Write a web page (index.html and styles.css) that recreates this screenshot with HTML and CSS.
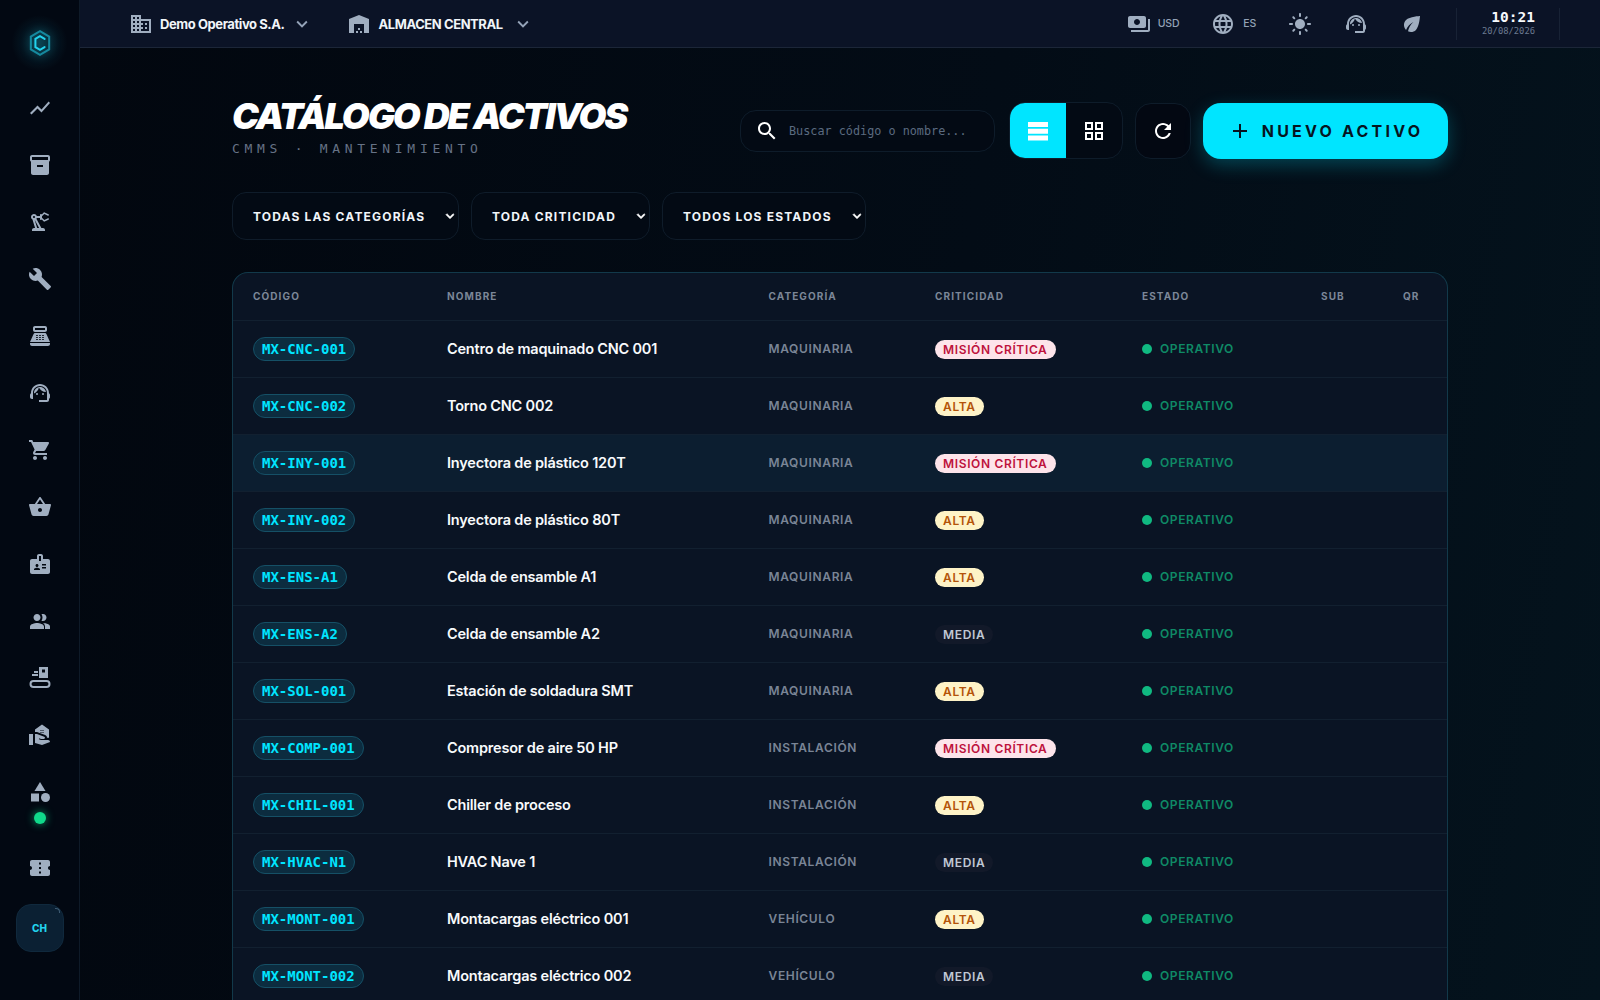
FILE: index.html
```html
<!DOCTYPE html>
<html lang="es">
<head>
  <meta charset="UTF-8">
  <title>Catálogo de Activos</title>
  <link rel="stylesheet" href="styles.css">
</head>
<body>
  <svg class="defs" width="0" height="0">
    <symbol id="i-chart" viewBox="0 0 24 24"><path d="M3.5 18.49l6-6.01 4 4L22 6.92l-1.41-1.41-7.09 7.97-4-4L2 16.99z"/></symbol>
    <symbol id="i-inventory" viewBox="0 0 24 24"><path d="M20 2H4c-1 0-2 .9-2 2v3.01c0 .72.43 1.34 1 1.69V20c0 1.1 1.1 2 2 2h14c.9 0 2-.9 2-2V8.7c.57-.35 1-.97 1-1.69V4c0-1.1-1-2-2-2zm-5 12H9v-2h6v2zm5-7H4V4l16-.02V7z"/></symbol>
    <symbol id="i-robot" viewBox="0 0 24 24"><path d="M19.93 8.35l-3.6 1.68L14 7.7V6.3l2.33-2.33 3.6 1.68c.38.18.82.01 1-.36.18-.38.01-.82-.36-1l-3.92-1.83c-.38-.18-.83-.1-1.13.2L13.78 4.4c-.18-.24-.46-.4-.78-.4-.55 0-1 .45-1 1v1H8.82C8.4 4.84 7.3 4 6 4 4.34 4 3 5.34 3 7c0 1.1.6 2.05 1.48 2.58L7.08 18H6c-1.1 0-2 .9-2 2v1h13v-1c0-1.1-.9-2-2-2h-1.62L8.41 8.77c.17-.24.31-.49.41-.77H12v1c0 .55.45 1 1 1 .32 0 .6-.16.78-.4l1.74 1.74c.3.3.75.38 1.13.2l3.92-1.83c.38-.18.54-.62.36-1-.18-.37-.62-.54-1-.36zM6 8c-.55 0-1-.45-1-1s.45-1 1-1 1 .45 1 1-.45 1-1 1zm5.11 10H9.17l-2.46-8h.1l4.3 8z"/></symbol>
    <symbol id="i-build" viewBox="0 0 24 24"><path d="M22.7 19l-9.1-9.1c.9-2.3.4-5-1.5-6.9-2-2-5-2.4-7.4-1.3L9 6 6 9 1.6 4.7C.4 7.1.9 10.1 2.9 12.1c1.9 1.9 4.6 2.4 6.9 1.5l9.1 9.1c.4.4 1 .4 1.4 0l2.3-2.3c.5-.4.5-1.1.1-1.4z"/></symbol>
    <symbol id="i-pos" viewBox="0 0 24 24"><path d="M17 2H7c-1.1 0-2 .9-2 2v2c0 1.1.9 2 2 2h10c1.1 0 2-.9 2-2V4c0-1.1-.9-2-2-2zm0 4H7V4h10v2zm3 16H4c-1.1 0-2-.9-2-2v-1h20v1c0 1.1-.9 2-2 2zm-1.47-11.81C18.21 9.47 17.49 9 16.7 9H7.3c-.79 0-1.51.47-1.83 1.19L2 18h20l-3.47-7.81zM9.5 16h-1c-.28 0-.5-.22-.5-.5s.22-.5.5-.5h1c.28 0 .5.22.5.5s-.22.5-.5.5zm0-2h-1c-.28 0-.5-.22-.5-.5s.22-.5.5-.5h1c.28 0 .5.22.5.5s-.22.5-.5.5zm0-2h-1c-.28 0-.5-.22-.5-.5s.22-.5.5-.5h1c.28 0 .5.22.5.5s-.22.5-.5.5zm3 4h-1c-.28 0-.5-.22-.5-.5s.22-.5.5-.5h1c.28 0 .5.22.5.5s-.22.5-.5.5zm0-2h-1c-.28 0-.5-.22-.5-.5s.22-.5.5-.5h1c.28 0 .5.22.5.5s-.22.5-.5.5zm0-2h-1c-.28 0-.5-.22-.5-.5s.22-.5.5-.5h1c.28 0 .5.22.5.5s-.22.5-.5.5zm3 4h-1c-.28 0-.5-.22-.5-.5s.22-.5.5-.5h1c.28 0 .5.22.5.5s-.22.5-.5.5zm0-2h-1c-.28 0-.5-.22-.5-.5s.22-.5.5-.5h1c.28 0 .5.22.5.5s-.22.5-.5.5zm0-2h-1c-.28 0-.5-.22-.5-.5s.22-.5.5-.5h1c.28 0 .5.22.5.5s-.22.5-.5.5z"/></symbol>
    <symbol id="i-agent" viewBox="0 0 24 24"><path d="M21 12.22C21 6.73 16.74 3 12 3c-4.69 0-9 3.65-9 9.28-.6.34-1 .98-1 1.72v2c0 1.1.9 2 2 2h1v-6.1c0-3.87 3.13-7 7-7s7 3.13 7 7V19h-8v2h8c1.1 0 2-.9 2-2v-1.22c.59-.31 1-.92 1-1.64v-2.3c0-.7-.41-1.31-1-1.62z"/><circle cx="9" cy="13" r="1"/><circle cx="15" cy="13" r="1"/><path d="M18 11.03C17.52 8.18 15.04 6 12.05 6c-3.03 0-6.29 2.51-6.03 6.45 2.47-1.01 4.33-3.21 4.86-5.89 1.31 2.63 4 4.44 7.12 4.47z"/></symbol>
    <symbol id="i-cart" viewBox="0 0 24 24"><path d="M7 18c-1.1 0-1.99.9-1.99 2S5.9 22 7 22s2-.9 2-2-.9-2-2-2zM1 2v2h2l3.6 7.59-1.35 2.45c-.16.28-.25.61-.25.96 0 1.1.9 2 2 2h12v-2H7.42c-.14 0-.25-.11-.25-.25l.03-.12.9-1.63h7.45c.75 0 1.41-.41 1.75-1.03l3.58-6.49c.08-.14.12-.31.12-.48 0-.55-.45-1-1-1H5.21l-.94-2H1zm16 16c-1.1 0-1.99.9-1.99 2s.89 2 1.99 2 2-.9 2-2-.9-2-2-2z"/></symbol>
    <symbol id="i-basket" viewBox="0 0 24 24"><path d="M17.21 9l-4.38-6.56c-.19-.28-.51-.42-.83-.42-.32 0-.64.14-.83.43L6.79 9H2c-.55 0-1 .45-1 1 0 .09.01.18.04.27l2.54 9.27c.23.84 1 1.46 1.92 1.46h13c.92 0 1.69-.62 1.93-1.46l2.54-9.27L23 10c0-.55-.45-1-1-1h-4.79zM9 9l3-4.4L15 9H9zm3 8c-1.1 0-2-.9-2-2s.9-2 2-2 2 .9 2 2-.9 2-2 2z"/></symbol>
    <symbol id="i-badge" viewBox="0 0 24 24"><path d="M20 7h-5V4c0-1.1-.9-2-2-2h-2c-1.1 0-2 .9-2 2v3H4c-1.1 0-2 .9-2 2v11c0 1.1.9 2 2 2h16c1.1 0 2-.9 2-2V9c0-1.1-.9-2-2-2zM9 12c.83 0 1.5.67 1.5 1.5S9.83 15 9 15s-1.5-.67-1.5-1.5S8.17 12 9 12zm3 6H6v-.75c0-1 2-1.5 3-1.5s3 .5 3 1.5V18zm1-9h-2V4h2v5zm5 7.5h-4V15h4v1.5zm0-3h-4V12h4v1.5z"/></symbol>
    <symbol id="i-group" viewBox="0 0 24 24"><path d="M9 12c1.93 0 3.5-1.57 3.5-3.500S10.930 5 9 5 5.500 6.570 5.500 8.500 7.070 12 9 12zm0 2c-2.340 0-7 1.170-7 3.500V20h14v-2.500c0-2.330-4.660-3.500-7-3.500zm6.040.05c1.160.84 1.960 1.960 1.960 3.450V20h5v-2.500c0-2.020-3.500-3.170-6.960-3.450zM15 12c1.930 0 3.500-1.570 3.500-3.500S16.930 5 15 5c-.54 0-1.040.13-1.500.35.630.89 1 1.980 1 3.150s-.37 2.260-1 3.150c.46.220.96.350 1.500.35z"/></symbol>
    <symbol id="i-conveyor" viewBox="0 0 24 24"><path fill-rule="evenodd" d="M11 1h9v11h-9zM14 3.500v3h3v-3zM6 5h4v2H6zM4 8h6v2H4zM5.500 14h13a4 4 0 0 1 0 8h-13a4 4 0 0 1 0-8zm0 2a2 2 0 0 0 0 4h13a2 2 0 0 0 0-4z"/></symbol>
    <symbol id="i-handhome" viewBox="0 0 24 24"><path d="M1 22h4V11H1v11zm19-5h-7l-2.09-.73.33-.94L13 16h2.82c.65 0 1.18-.53 1.18-1.18 0-.49-.31-.93-.77-1.11L8.97 11H7v9.02L14 22l8-3c-.01-1.1-.89-2-2-2z"/><path d="M14 1.5l-7 5V9h2l8.11 3.06C18.26 12.49 19 13.54 19 14.82h2V6.5l-7-5zM13.5 10h-1V9h1v1zm0-2h-1V7h1v1zm2 2h-1V9h1v1zm0-2h-1V7h1v1z"/></symbol>
    <symbol id="i-category" viewBox="0 0 24 24"><path d="M12 2l-5.500 9h11z"/><circle cx="17.5" cy="17.5" r="4.5"/><path d="M3 13.5h8v8H3z"/></symbol>
    <symbol id="i-ticket" viewBox="0 0 24 24"><path d="M22 10V6c0-1.11-.9-2-2-2H4c-1.1 0-1.99.89-1.99 2v4c1.1 0 1.99.9 1.99 2s-.89 2-2 2v4c0 1.1.9 2 2 2h16c1.1 0 2-.9 2-2v-4c-1.1 0-2-.9-2-2s.9-2 2-2zm-9 7.5h-2v-2h2v2zm0-4.500h-2v-2h2v2zm0-4.500h-2v-2h2v2z"/></symbol>
    <symbol id="i-domain" viewBox="0 0 24 24"><path d="M12 7V3H2v18h20V7H12zM6 19H4v-2h2v2zm0-4H4v-2h2v2zm0-4H4V9h2v2zm0-4H4V5h2v2zm4 12H8v-2h2v2zm0-4H8v-2h2v2zm0-4H8V9h2v2zm0-4H8V5h2v2zm10 12h-8v-2h2v-2h-2v-2h2v-2h-2V9h8v10zm-2-8h-2v2h2v-2zm0 4h-2v2h2v-2z"/></symbol>
    <symbol id="i-warehouse" viewBox="0 0 24 24"><path d="M22 21V7L12 3 2 7v14h5v-9h10v9h5zm-11-2H9v2h2v-2zm2-3h-2v2h2v-2zm2 3h-2v2h2v-2z"/></symbol>
    <symbol id="i-payments" viewBox="0 0 24 24"><path d="M19 14V6c0-1.1-.9-2-2-2H3c-1.1 0-2 .9-2 2v8c0 1.1.9 2 2 2h14c1.1 0 2-.9 2-2zm-9-1c-1.66 0-3-1.34-3-3s1.34-3 3-3 3 1.34 3 3-1.34 3-3 3zm13-6v11c0 1.1-.9 2-2 2H4v-2h17V7h2z"/></symbol>
    <symbol id="i-globe" viewBox="0 0 24 24"><path d="M11.99 2C6.47 2 2 6.48 2 12s4.47 10 9.99 10C17.52 22 22 17.52 22 12S17.52 2 11.99 2zm6.93 6h-2.95c-.32-1.25-.78-2.45-1.38-3.56 1.84.63 3.37 1.91 4.33 3.56zM12 4.04c.83 1.2 1.48 2.53 1.91 3.96h-3.82c.43-1.43 1.08-2.76 1.91-3.96zM4.26 14C4.1 13.36 4 12.69 4 12s.1-1.36.26-2h3.38c-.08.66-.14 1.32-.14 2 0 .68.06 1.34.14 2H4.26zm.82 2h2.95c.32 1.25.78 2.45 1.38 3.56-1.84-.63-3.37-1.9-4.33-3.56zm2.95-8H5.08c.96-1.66 2.49-2.93 4.33-3.56C8.81 5.55 8.35 6.75 8.03 8zM12 19.96c-.83-1.2-1.48-2.53-1.91-3.96h3.82c-.43 1.43-1.08 2.76-1.91 3.96zM14.34 14H9.66c-.09-.66-.16-1.32-.16-2 0-.68.07-1.35.16-2h4.68c.09.65.16 1.32.16 2 0 .68-.07 1.34-.16 2zm.25 5.56c.6-1.11 1.06-2.31 1.38-3.56h2.95c-.96 1.65-2.49 2.93-4.33 3.56zM16.36 14c.08-.66.14-1.32.14-2 0-.68-.06-1.34-.14-2h3.38c.16.64.26 1.31.26 2s-.1 1.36-.26 2h-3.38z"/></symbol>
    <symbol id="i-sun" viewBox="0 0 24 24"><path d="M12 7c-2.76 0-5 2.24-5 5s2.24 5 5 5 5-2.24 5-5-2.24-5-5-5zM2 13h2c.55 0 1-.45 1-1s-.45-1-1-1H2c-.55 0-1 .45-1 1s.45 1 1 1zm18 0h2c.55 0 1-.45 1-1s-.45-1-1-1h-2c-.55 0-1 .45-1 1s.45 1 1 1zM11 2v2c0 .55.45 1 1 1s1-.45 1-1V2c0-.55-.45-1-1-1s-1 .45-1 1zm0 18v2c0 .55.45 1 1 1s1-.45 1-1v-2c0-.55-.45-1-1-1s-1 .45-1 1zM5.99 4.58c-.39-.39-1.03-.39-1.41 0-.39.39-.39 1.03 0 1.41l1.06 1.06c.39.39 1.03.39 1.41 0s.39-1.03 0-1.41L5.99 4.58zm12.37 12.37c-.39-.39-1.03-.39-1.41 0-.39.39-.39 1.03 0 1.41l1.06 1.06c.39.39 1.03.39 1.41 0 .39-.39.39-1.03 0-1.41l-1.06-1.06zm1.06-10.96c.39-.39.39-1.03 0-1.41-.39-.39-1.03-.39-1.41 0l-1.06 1.06c-.39.39-.39 1.03 0 1.41s1.03.39 1.41 0l1.06-1.06zM7.05 18.36c.39-.39.39-1.03 0-1.41-.39-.39-1.03-.39-1.41 0l-1.06 1.06c-.39.39-.39 1.03 0 1.41s1.03.39 1.41 0l1.06-1.06z"/></symbol>
    <symbol id="i-eco" viewBox="0 0 24 24"><path d="M6.05 8.05c-2.73 2.73-2.73 7.15-.02 9.88 1.47-3.4 4.09-6.24 7.36-7.93-2.77 2.34-4.71 5.61-5.39 9.32 2.6 1.23 5.8.78 7.95-1.37C19.43 14.47 20 4 20 4S9.53 4.57 6.05 8.05z"/></symbol>
    <symbol id="i-search" viewBox="0 0 24 24"><path d="M15.5 14h-.79l-.28-.27C15.41 12.59 16 11.11 16 9.5 16 5.91 13.09 3 9.5 3S3 5.91 3 9.5 5.91 16 9.5 16c1.61 0 3.09-.59 4.23-1.57l.27.28v.79l5 4.99L20.49 19l-4.99-5zm-6 0C7.01 14 5 11.99 5 9.5S7.01 5 9.5 5 14 7.01 14 9.5 11.99 14 9.5 14z"/></symbol>
    <symbol id="i-bars" viewBox="0 0 24 24"><path d="M2 3h20v5H2zM2 9.8h20v5H2zM2 16.5h20v5H2z"/></symbol>
    <symbol id="i-grid" viewBox="0 0 24 24"><path d="M3 3v8h8V3H3zm6 6H5V5h4v4zm-6 4v8h8v-8H3zm6 6H5v-4h4v4zm4-16v8h8V3h-8zm6 6h-4V5h4v4zm-6 4v8h8v-8h-8zm6 6h-4v-4h4v4z"/></symbol>
    <symbol id="i-refresh" viewBox="0 0 24 24"><path d="M17.65 6.35C16.2 4.9 14.21 4 12 4c-4.42 0-7.99 3.58-7.99 8s3.57 8 7.99 8c3.73 0 6.84-2.55 7.73-6h-2.08c-.82 2.33-3.04 4-5.65 4-3.31 0-6-2.69-6-6s2.69-6 6-6c1.66 0 3.14.69 4.22 1.78L13 11h7V4l-2.35 2.35z"/></symbol>
    <symbol id="i-add" viewBox="0 0 24 24"><path d="M19 13h-6v6h-2v-6H5v-2h6V5h2v6h6v2z"/></symbol>
    <symbol id="i-more" viewBox="0 0 24 24"><path d="M16.59 8.59L12 13.17 7.41 8.59 6 10l6 6 6-6z"/></symbol>
  </svg>

  <aside class="sidebar">
    <div class="logo">
      <svg class="logo-mark" viewBox="0 0 24 30" width="22" height="28" fill="none" stroke="#22d3ee" stroke-width="2.2">
        <path d="M12 2 22 8v14l-10 6L2 22V8z" stroke-opacity=".55"/>
        <path d="M17 10.500 12 7.500 7 10.500v9l5 3 5-3" stroke-linecap="round"/>
      </svg>
    </div>
    <nav class="nav">
      <a class="nav-item"><svg class="icon"><use href="#i-chart"/></svg></a>
      <a class="nav-item"><svg class="icon"><use href="#i-inventory"/></svg></a>
      <a class="nav-item"><svg class="icon"><use href="#i-robot"/></svg></a>
      <a class="nav-item"><svg class="icon"><use href="#i-build"/></svg></a>
      <a class="nav-item"><svg class="icon"><use href="#i-pos"/></svg></a>
      <a class="nav-item"><svg class="icon"><use href="#i-agent"/></svg></a>
      <a class="nav-item"><svg class="icon"><use href="#i-cart"/></svg></a>
      <a class="nav-item"><svg class="icon"><use href="#i-basket"/></svg></a>
      <a class="nav-item"><svg class="icon"><use href="#i-badge"/></svg></a>
      <a class="nav-item"><svg class="icon"><use href="#i-group"/></svg></a>
      <a class="nav-item"><svg class="icon"><use href="#i-conveyor"/></svg></a>
      <a class="nav-item"><svg class="icon"><use href="#i-handhome"/></svg></a>
      <a class="nav-item"><svg class="icon"><use href="#i-category"/></svg></a>
      <span class="nav-dot"></span>
      <a class="nav-item"><svg class="icon"><use href="#i-ticket"/></svg></a>
    </nav>
    <div class="avatar">CH</div>
  </aside>

  <div class="page">
    <header class="topbar">
      <div class="org">
        <svg class="icon"><use href="#i-domain"/></svg>
        <span class="org-name">Demo Operativo S.A.</span>
        <svg class="chev"><use href="#i-more"/></svg>
      </div>
      <div class="org org-site">
        <svg class="icon"><use href="#i-warehouse"/></svg>
        <span class="org-name">ALMACEN CENTRAL</span>
        <svg class="chev"><use href="#i-more"/></svg>
      </div>
      <div class="top-tools">
        <span class="tool tool-usd"><svg class="icon"><use href="#i-payments"/></svg><small>USD</small></span>
        <span class="tool tool-es"><svg class="icon"><use href="#i-globe"/></svg><small>ES</small></span>
        <span class="tool tool-sun"><svg class="icon"><use href="#i-sun"/></svg></span>
        <span class="tool tool-agent"><svg class="icon"><use href="#i-agent"/></svg></span>
        <span class="tool tool-eco"><svg class="icon"><use href="#i-eco"/></svg></span>
        <div class="clock">
          <strong>10:21</strong>
          <span>20/08/2026</span>
        </div>
      </div>
    </header>

    <main class="content">
      <section class="page-head">
        <div class="page-title">
          <h1>CATÁLOGO DE ACTIVOS</h1>
          <p>CMMS · MANTENIMIENTO</p>
        </div>
        <div class="actions">
          <label class="search">
            <svg class="icon"><use href="#i-search"/></svg>
            <span>Buscar código o nombre...</span>
          </label>
          <div class="view-toggle">
            <button class="view-btn active"><svg class="icon"><use href="#i-bars"/></svg></button>
            <button class="view-btn"><svg class="icon"><use href="#i-grid"/></svg></button>
          </div>
          <button class="refresh"><svg class="icon"><use href="#i-refresh"/></svg></button>
          <button class="new-btn"><svg class="icon"><use href="#i-add"/></svg>NUEVO ACTIVO</button>
        </div>
      </section>

      <section class="filters">
        <div class="filter filter-cat">TODAS LAS CATEGORÍAS<svg class="chev"><use href="#i-more"/></svg></div>
        <div class="filter filter-crit">TODA CRITICIDAD<svg class="chev"><use href="#i-more"/></svg></div>
        <div class="filter filter-est">TODOS LOS ESTADOS<svg class="chev"><use href="#i-more"/></svg></div>
      </section>

      <section class="table-wrap">
        <table class="assets">
          <colgroup>
            <col class="c-code"><col class="c-name"><col class="c-cat"><col class="c-crit"><col class="c-est"><col class="c-sub"><col class="c-qr">
          </colgroup>
          <thead>
            <tr><th>CÓDIGO</th><th>NOMBRE</th><th>CATEGORÍA</th><th>CRITICIDAD</th><th>ESTADO</th><th>SUB</th><th>QR</th></tr>
          </thead>
          <tbody>
            <tr><td><span class="code">MX-CNC-001</span></td><td class="name">Centro de maquinado CNC 001</td><td class="cat">MAQUINARIA</td><td><span class="crit mision">MISIÓN CRÍTICA</span></td><td><span class="status">OPERATIVO</span></td><td></td><td></td></tr>
            <tr><td><span class="code">MX-CNC-002</span></td><td class="name">Torno CNC 002</td><td class="cat">MAQUINARIA</td><td><span class="crit alta">ALTA</span></td><td><span class="status">OPERATIVO</span></td><td></td><td></td></tr>
            <tr class="hover"><td><span class="code">MX-INY-001</span></td><td class="name">Inyectora de plástico 120T</td><td class="cat">MAQUINARIA</td><td><span class="crit mision">MISIÓN CRÍTICA</span></td><td><span class="status">OPERATIVO</span></td><td></td><td></td></tr>
            <tr><td><span class="code">MX-INY-002</span></td><td class="name">Inyectora de plástico 80T</td><td class="cat">MAQUINARIA</td><td><span class="crit alta">ALTA</span></td><td><span class="status">OPERATIVO</span></td><td></td><td></td></tr>
            <tr><td><span class="code">MX-ENS-A1</span></td><td class="name">Celda de ensamble A1</td><td class="cat">MAQUINARIA</td><td><span class="crit alta">ALTA</span></td><td><span class="status">OPERATIVO</span></td><td></td><td></td></tr>
            <tr><td><span class="code">MX-ENS-A2</span></td><td class="name">Celda de ensamble A2</td><td class="cat">MAQUINARIA</td><td><span class="crit media">MEDIA</span></td><td><span class="status">OPERATIVO</span></td><td></td><td></td></tr>
            <tr><td><span class="code">MX-SOL-001</span></td><td class="name">Estación de soldadura SMT</td><td class="cat">MAQUINARIA</td><td><span class="crit alta">ALTA</span></td><td><span class="status">OPERATIVO</span></td><td></td><td></td></tr>
            <tr><td><span class="code">MX-COMP-001</span></td><td class="name">Compresor de aire 50 HP</td><td class="cat">INSTALACIÓN</td><td><span class="crit mision">MISIÓN CRÍTICA</span></td><td><span class="status">OPERATIVO</span></td><td></td><td></td></tr>
            <tr><td><span class="code">MX-CHIL-001</span></td><td class="name">Chiller de proceso</td><td class="cat">INSTALACIÓN</td><td><span class="crit alta">ALTA</span></td><td><span class="status">OPERATIVO</span></td><td></td><td></td></tr>
            <tr><td><span class="code">MX-HVAC-N1</span></td><td class="name">HVAC Nave 1</td><td class="cat">INSTALACIÓN</td><td><span class="crit media">MEDIA</span></td><td><span class="status">OPERATIVO</span></td><td></td><td></td></tr>
            <tr><td><span class="code">MX-MONT-001</span></td><td class="name">Montacargas eléctrico 001</td><td class="cat">VEHÍCULO</td><td><span class="crit alta">ALTA</span></td><td><span class="status">OPERATIVO</span></td><td></td><td></td></tr>
            <tr><td><span class="code">MX-MONT-002</span></td><td class="name">Montacargas eléctrico 002</td><td class="cat">VEHÍCULO</td><td><span class="crit media">MEDIA</span></td><td><span class="status">OPERATIVO</span></td><td></td><td></td></tr>
          </tbody>
        </table>
      </section>
    </main>
  </div>
</body>
</html>
```

FILE: styles.css
```css
* {
  box-sizing: border-box;
}

body {
  margin: 0;
  height: 100vh;
  display: flex;
  overflow: hidden;
  background: #02080f;
  color: #fff;
  font-family: 'Inter', 'Noto Sans', sans-serif;
}

.defs {
  position: absolute;
}

.icon {
  width: 24px;
  height: 24px;
  fill: #a0aec0;
  flex: none;
}

.chev {
  width: 22px;
  height: 22px;
  fill: #94a3b8;
  flex: none;
}

/* sidebar */
.sidebar {
  width: 80px;
  flex: none;
  background: #020812;
  border-right: 1px solid #0e1a28;
  display: flex;
  flex-direction: column;
  align-items: center;
}

.logo {
  height: 79px;
  width: 100%;
  display: flex;
  align-items: center;
  justify-content: center;
  padding-top: 7px;
  background: radial-gradient(circle at 50% 43px, rgba(34, 211, 238, 0.16), transparent 28px);
}

.logo-mark {
  filter: drop-shadow(0 0 5px rgba(34, 211, 238, 0.6));
}

.nav {
  display: flex;
  flex-direction: column;
  align-items: center;
}

.nav-item {
  height: 57px;
  width: 56px;
  display: flex;
  align-items: center;
  justify-content: center;
}

.nav-dot {
  width: 12px;
  height: 12px;
  margin: -8px 0 15px;
  border-radius: 50%;
  background: #10d98a;
  box-shadow: 0 0 8px rgba(16, 217, 138, 0.7);
}

.avatar {
  position: relative;
  width: 48px;
  height: 48px;
  margin-top: 8px;
  border-radius: 15px;
  background: #0b2033;
  border: 1px solid #10293d;
  color: #22d3ee;
  font-size: 10px;
  font-weight: 800;
  display: flex;
  align-items: center;
  justify-content: center;
}

.avatar::after {
  content: "";
  position: absolute;
  top: 3px;
  right: 3px;
  width: 4px;
  height: 4px;
  border-top: 1px solid #3d5a73;
  border-right: 1px solid #3d5a73;
  border-radius: 0 4px 0 0;
}

/* topbar */
.page {
  flex: 1;
  min-width: 0;
  display: flex;
  flex-direction: column;
  background: linear-gradient(100deg, #02070f 0%, #030c16 55%, #04131d 100%);
}

.topbar {
  height: 48px;
  flex: none;
  background: #0b1326;
  border-bottom: 1px solid #1c2638;
  display: flex;
  align-items: center;
  padding-left: 49px;
}

.org {
  display: flex;
  align-items: center;
  gap: 7px;
}

.org-name {
  font-size: 13px;
  font-weight: 700;
  letter-spacing: -0.42px;
  color: #f1f5f9;
}

.org .chev {
  margin-left: 0;
}

.org-site {
  margin-left: 34px;
}

.org-site .chev {
  margin-left: 2px;
}

.top-tools {
  margin-left: auto;
  height: 100%;
  display: flex;
  align-items: center;
}

.tool {
  display: flex;
  align-items: center;
  gap: 8px;
}

.tool small {
  font-size: 10.5px;
  font-weight: 500;
  letter-spacing: -0.2px;
  color: #94a3b8;
}

.tool-usd {
  gap: 7px;
}

.tool-es {
  margin-left: 32px;
}

.tool-sun {
  margin-left: 32px;
}

.tool-agent {
  margin-left: 32px;
}

.tool-eco {
  margin-left: 32px;
}

.clock {
  margin-left: 32px;
  margin-right: 40px;
  width: 104px;
  height: 32px;
  padding-right: 24px;
  border-left: 1px solid #182235;
  border-right: 1px solid #182235;
  display: flex;
  flex-direction: column;
  align-items: flex-end;
  justify-content: center;
  font-family: 'DejaVu Sans Mono', monospace;
}

.clock strong {
  font-size: 14.5px;
  line-height: 15px;
  font-weight: 700;
  color: #f8fafc;
}

.clock span {
  font-size: 8.8px;
  line-height: 12px;
  color: #6b7a90;
}

/* page head */
.content {
  width: 1216px;
  margin: 0 auto;
  padding-top: 54px;
}

.page-head {
  display: flex;
  align-items: center;
  justify-content: space-between;
}

.page-title {
  align-self: flex-start;
  margin-top: -4px;
}

.page-title h1 {
  margin: 0;
  font-size: 36px;
  line-height: 36px;
  font-weight: 900;
  font-style: italic;
  letter-spacing: -2.1px;
  color: #fff;
}

.page-title p {
  margin: 7px 0 0;
  font-family: 'DejaVu Sans Mono', monospace;
  font-size: 13px;
  line-height: 16px;
  letter-spacing: 4.7px;
  color: #667286;
}

.actions {
  display: flex;
  align-items: center;
  gap: 12px;
}

.search {
  width: 255px;
  height: 42px;
  margin-right: 2px;
  padding-left: 14px;
  display: flex;
  align-items: center;
  gap: 10px;
  border-radius: 16px;
  background: #030a14;
  border: 1px solid #0e1c2a;
  font-family: 'DejaVu Sans Mono', monospace;
  font-size: 11.8px;
  color: #5b6b80;
}

.search .icon {
  fill: #fff;
}

.view-toggle {
  width: 114px;
  height: 57px;
  display: flex;
  border-radius: 16px;
  border: 1px solid #0e1c2a;
  overflow: hidden;
  background: #030a14;
}

.view-btn {
  flex: 1;
  border: none;
  background: none;
  padding: 0;
  display: flex;
  align-items: center;
  justify-content: center;
}

.view-btn .icon {
  fill: #fff;
}

.view-btn.active {
  background: #00e5ff;
}

.refresh {
  width: 56px;
  height: 56px;
  padding: 0;
  border-radius: 16px;
  background: #030812;
  border: 1px solid #0e1c2a;
  display: flex;
  align-items: center;
  justify-content: center;
}

.refresh .icon {
  fill: #fff;
}

.new-btn {
  width: 245px;
  height: 56px;
  border: none;
  padding: 0;
  border-radius: 18px;
  background: #00e5ff;
  color: #06141f;
  box-shadow: 0 6px 18px rgba(0, 229, 255, 0.25);
  display: flex;
  align-items: center;
  justify-content: center;
  gap: 10px;
  font-family: 'Inter', sans-serif;
  font-size: 16px;
  font-weight: 700;
  letter-spacing: 3.2px;
}

.new-btn .icon {
  fill: #06141f;
}

/* filters */
.filters {
  margin-top: 33px;
  display: flex;
  gap: 12px;
}

.filter {
  height: 48px;
  padding: 0 0 0 20px;
  display: flex;
  align-items: center;
  justify-content: space-between;
  border-radius: 14px;
  background: #030a14;
  border: 1px solid #0f1c2a;
  font-size: 12px;
  font-weight: 700;
  letter-spacing: 1.18px;
  color: #f1f5f9;
}

.filter .chev {
  width: 16px;
  height: 16px;
  fill: #fff;
  stroke: #fff;
  stroke-width: 1px;
}

.filter-cat {
  width: 227px;
}

.filter-crit {
  width: 179px;
}

.filter-est {
  width: 204px;
}

/* table */
.table-wrap {
  margin-top: 32px;
  border: 1px solid #12394a;
  border-bottom: none;
  border-radius: 16px 16px 0 0;
  background: #0a1424;
  overflow: hidden;
}

.assets {
  width: 100%;
  table-layout: fixed;
  border-collapse: collapse;
}

.c-code { width: 194px; }
.c-name { width: 321.5px; }
.c-cat { width: 166.5px; }
.c-crit { width: 207px; }
.c-est { width: 179px; }
.c-sub { width: 82px; }

.assets th {
  height: 47px;
  padding: 0 0 0 20px;
  text-align: left;
  font-size: 10px;
  font-weight: 700;
  letter-spacing: 1.1px;
  color: #7c8798;
  border-bottom: 1px solid #122030;
}

.assets td {
  height: 57px;
  padding: 0 0 0 20px;
  border-bottom: 1px solid #122030;
  white-space: nowrap;
}

.assets tr.hover td {
  background: #0c1e30;
}

.code {
  display: inline-block;
  height: 24px;
  line-height: 22px;
  padding: 0 8px;
  border-radius: 12px;
  background: #0c2c3f;
  border: 1px solid #155066;
  font-family: 'DejaVu Sans Mono', monospace;
  font-size: 14px;
  font-weight: 700;
  color: #00e5ff;
}

.name {
  font-size: 14.5px;
  font-weight: 600;
  letter-spacing: -0.2px;
  color: #f8fafc;
}

.cat {
  font-size: 12px;
  font-weight: 600;
  letter-spacing: 0.65px;
  color: #7a8596;
}

.crit {
  display: inline-block;
  height: 19px;
  line-height: 19px;
  padding: 0 8px;
  border-radius: 10px;
  font-size: 12px;
  font-weight: 600;
  letter-spacing: 0.65px;
}

.crit.mision {
  background: #fde4ea;
  color: #be123c;
}

.crit.alta {
  background: #fef3c7;
  color: #b45309;
}

.crit.media {
  background: #121929;
  color: #c0c8d4;
}

.status {
  display: flex;
  align-items: center;
  gap: 8px;
  font-size: 12px;
  font-weight: 600;
  letter-spacing: 0.6px;
  color: #0f8a66;
}

.status::before {
  content: "";
  width: 10px;
  height: 10px;
  border-radius: 50%;
  background: #10b981;
}
```
